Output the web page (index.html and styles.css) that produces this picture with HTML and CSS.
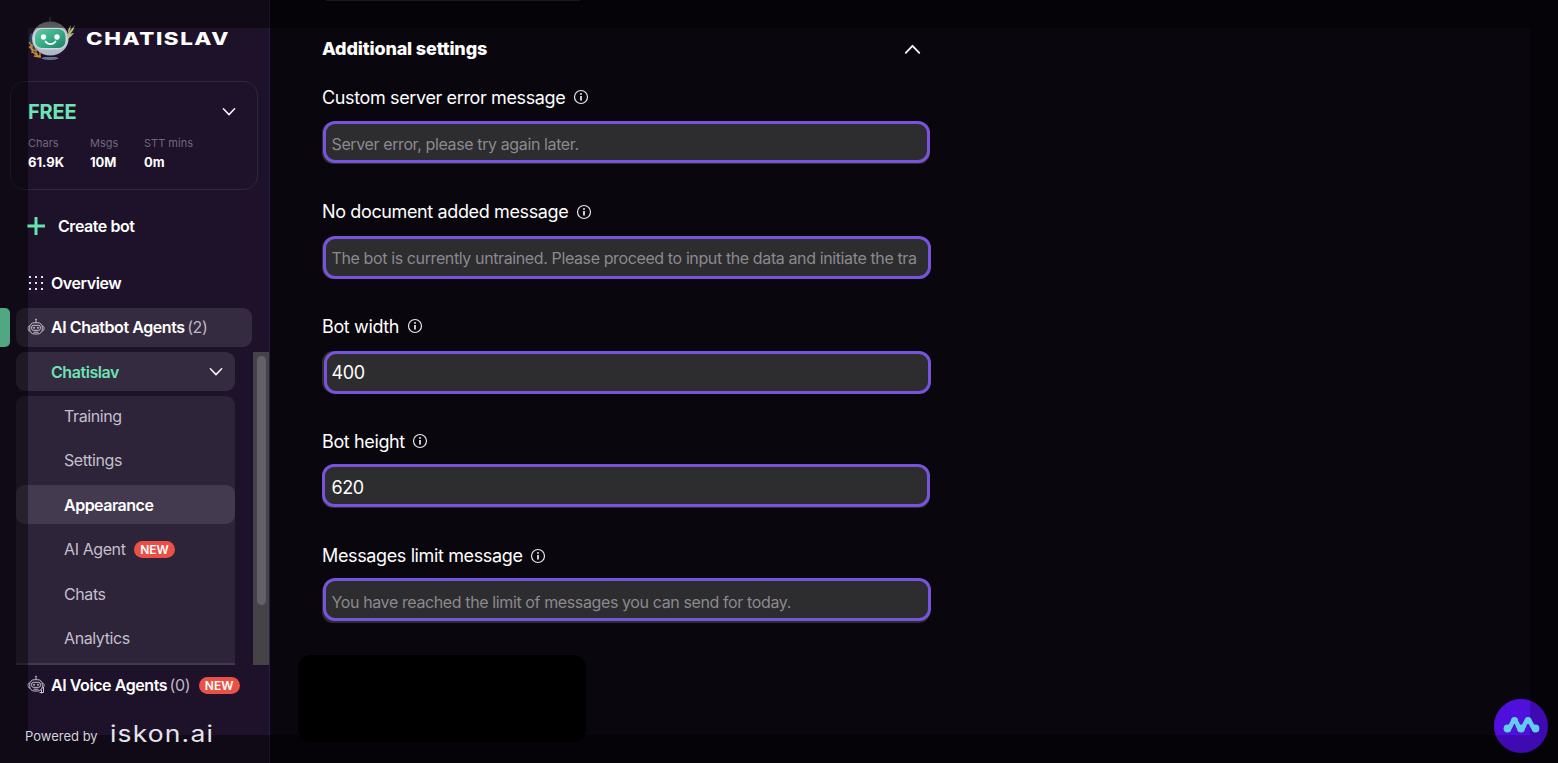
FILE: index.html
```html
<!DOCTYPE html>
<html lang="en">
<head>
<meta charset="utf-8">
<title>Chatislav</title>
<link rel="stylesheet" href="styles.css">
</head>
<body>
<svg class="defs" width="0" height="0">
  <symbol id="info" viewBox="0 0 16 16"><circle cx="8" cy="8" r="6.500" fill="none" stroke="#e8e8ec" stroke-width="1.200"/><path d="M8 7v4.400" stroke="#fff" stroke-width="1.600"/><circle cx="8" cy="4.900" r=".95" fill="#fff"/></symbol>
  <symbol id="chev" viewBox="0 0 14 10"><path d="M1.400 1.800 7 7.600l5.600-5.800" fill="none" stroke="#f3f1f6" stroke-width="1.600" stroke-linecap="round" stroke-linejoin="round"/></symbol>
  <symbol id="bot" viewBox="0 0 18 18"><g fill="none" stroke="#c6c2cf" stroke-width="1"><path d="M9 4.500V2.400"/><circle cx="9" cy="1.600" r=".6"/><rect x="2.700" y="4.700" width="12.600" height="11.300" rx="4.600"/><rect x="4.600" y="7.300" width="8.800" height="5" rx="1.800"/><path d="M2.700 8C.3 8 .3 13 2.700 13M15.300 8c2.400 0 2.400 5 0 5M6.500 14.200h5"/><circle cx="7" cy="9.700" r=".7"/><circle cx="11" cy="9.700" r=".7"/></g></symbol>
</svg>
<div class="app">
  <aside class="sidebar">
    <header class="brand">
      <svg class="robot" width="48" height="46" viewBox="0 0 48 46">
        <defs>
          <linearGradient id="shell" x1="0" y1="0" x2="0" y2="1"><stop offset="0" stop-color="#8e8e96"/><stop offset=".5" stop-color="#c3c5d0"/><stop offset="1" stop-color="#adb3c6"/></linearGradient>
          <linearGradient id="face" x1="0" y1="0" x2="1" y2="1"><stop offset="0" stop-color="#62c9a0"/><stop offset=".5" stop-color="#35ad86"/><stop offset="1" stop-color="#1d8068"/></linearGradient>
        </defs>
        <path d="M22 0v6" stroke="#66636e" stroke-width="1"/>
        <path d="M38 20c2-4 5-8 9-12-1 5-3 7-5 9 2-1 3-1 4-1-2 3-5 5-8 7zM40 15c0-3 1-5 3-7 0 3-1 6-3 8z" fill="#b3bd78"/>
        <path d="M3 16c-3 5-2 14 4 19l3-3C5 28 5 22 6 17z" fill="#244a5a"/>
        <ellipse cx="22.300" cy="21.500" rx="18.300" ry="17" fill="url(#shell)"/>
        <rect x="5.500" y="10.500" width="33.500" height="22" rx="9" fill="#d4d7df"/>
        <rect x="7" y="12" width="30.500" height="19" rx="7" fill="url(#face)"/>
        <circle cx="15.500" cy="20" r="2.700" fill="#fff"/><circle cx="29" cy="20" r="2.700" fill="#fff"/>
        <path d="M17.500 24.500c2.500 3.600 7.500 3.600 10 0" stroke="#fff" stroke-width="1.700" fill="none" stroke-linecap="round"/>
        <path d="M13 41.500q9 3 18 0l-3-1.500H16z" fill="#65708f"/>
        <path d="M1 25l3 5M1 30l6 4M3 35l7 2M6 39l6 1M4 27v5M8 31v5M12 35v5M2 29q3 9 11 11" stroke="#c28a3c" stroke-width="1.300" fill="none"/>
      </svg>
      <svg class="wordmark" width="150" height="20"><text x="1" y="15.500" textLength="144" lengthAdjust="spacingAndGlyphs">CHATISLAV</text></svg>
    </header>
    <section class="plan">
      <div class="plan-head"><span class="plan-name">FREE</span><svg width="14" height="10"><use href="#chev"/></svg></div>
      <div class="stats">
        <div class="stat s1"><small>Chars</small><b>61.9K</b></div>
        <div class="stat s2"><small>Msgs</small><b>10M</b></div>
        <div class="stat"><small>STT mins</small><b>0m</b></div>
      </div>
    </section>
    <a class="create"><svg width="18" height="18"><path d="M9 0v18M0 9h18" stroke="#67e3b0" stroke-width="3"/></svg><span>Create bot</span></a>
    <a class="item overview"><svg width="18" height="16" viewBox="0 0 18 16"><g fill="#e4e2e8"><rect x="2" y="1" width="2" height="2"/><rect x="8" y="1" width="2" height="2"/><rect x="14" y="1" width="2" height="2"/><rect x="2" y="7" width="2" height="2"/><rect x="8" y="7" width="2" height="2"/><rect x="14" y="7" width="2" height="2"/><rect x="2" y="13" width="2" height="2"/><rect x="8" y="13" width="2" height="2"/><rect x="14" y="13" width="2" height="2"/></g></svg><span>Overview</span></a>
    <div class="active-row"><i class="tab"></i><a class="item chatbots"><svg width="18" height="18"><use href="#bot"/></svg><span>AI Chatbot Agents</span><em>(2)</em></a></div>
    <div class="scroll">
      <div class="tree">
        <a class="bot-row"><span>Chatislav</span><svg width="14" height="10"><use href="#chev"/></svg></a>
        <nav class="sub">
          <a><span>Training</span></a>
          <a><span>Settings</span></a>
          <a class="current"><span>Appearance</span></a>
          <a><span>AI Agent</span><mark>NEW</mark></a>
          <a><span>Chats</span></a>
          <a><span>Analytics</span></a>
        </nav>
      </div>
      <div class="track"><div class="thumb"></div></div>
    </div>
    <a class="item voice"><svg width="18" height="20" viewBox="0 0 18 20"><use href="#bot" width="18" height="18"/><path d="M16.500 12v5.500h-4M14.500 14.500v4" stroke="#c6c2cf" fill="none"/></svg><span>AI Voice Agents</span><em>(0)</em><mark>NEW</mark></a>
    <footer class="powered"><span>Powered by</span><svg width="120" height="30"><text x="0" y="22" textLength="104" lengthAdjust="spacingAndGlyphs">iskon.ai</text></svg></footer>
  </aside>
  <main class="main">
    <div class="prev"></div>
    <div class="content">
      <div class="section-head"><h2>Additional settings</h2><svg class="up" width="17" height="12" viewBox="0 0 14 10"><use href="#chev"/></svg></div>
      <div class="field f1"><label>Custom server error message <svg width="16" height="16"><use href="#info"/></svg></label><div class="input"><span>Server error, please try again later.</span></div></div>
      <div class="field f2"><label>No document added message <svg width="16" height="16"><use href="#info"/></svg></label><div class="input"><span>The bot is currently untrained. Please proceed to input the data and initiate the tra</span></div></div>
      <div class="field f3"><label>Bot width <svg width="16" height="16"><use href="#info"/></svg></label><div class="input value"><span>400</span></div></div>
      <div class="field f4"><label>Bot height <svg width="16" height="16"><use href="#info"/></svg></label><div class="input value"><span>620</span></div></div>
      <div class="field f5"><label>Messages limit message <svg width="16" height="16"><use href="#info"/></svg></label><div class="input"><span>You have reached the limit of messages you can send for today.</span></div></div>
    </div>
    <div class="blank"></div>
  </main>
</div>
<div class="vignette"></div>
<svg class="fab" width="54" height="54" viewBox="0 0 54 54"><defs><clipPath id="disc"><circle cx="27" cy="27" r="27"/></clipPath></defs><g clip-path="url(#disc)"><path d="M0 0h54v54H0z" fill="#3f0ab2"/><path d="M0 0h36v36H0z" fill="#500fdc"/></g><path d="M13 29.500C18 30 17 21.500 20.500 21.500S23 30 27 30s3-8.500 7-8.500S37 30 41.500 29.500" fill="none" stroke="#62cdee" stroke-width="4.500" stroke-linecap="round" stroke-linejoin="round"/><g fill="#62cdee"><circle cx="13.500" cy="29.500" r="3.900"/><circle cx="20.500" cy="21.500" r="3.500"/><circle cx="27" cy="29.500" r="3.900"/><circle cx="34" cy="21.500" r="3.500"/><circle cx="41.500" cy="29.500" r="3.900"/></g></svg>
</body>
</html>
```
FILE: styles.css
```css
* { box-sizing: border-box; }
body { margin: 0; background: #09060d; font-family: Inter, "Liberation Sans", sans-serif; color: #fff; overflow: hidden; }
.defs { position: absolute; }
svg { display: block; flex: none; }
.app { display: flex; width: 1558px; height: 763px; }
.sidebar { width: 270px; flex: none; background: #1d1229; border-right: 1px solid #2b1c4e; display: flex; flex-direction: column; }
.brand { height: 81px; padding: 17px 0 0 28px; display: flex; flex: none; }
.wordmark { margin: 12px 0 0 9px; }
.wordmark text { font: 800 17px Inter, sans-serif; fill: #fff; letter-spacing: 1.2px; }
.plan { margin-left: 10px; width: 248px; height: 109px; border: 1px solid #30273d; border-radius: 14px; padding: 17px 21px 0 17px; flex: none; }
.plan-head { display: flex; justify-content: space-between; align-items: center; height: 26px; }
.plan-name { color: #6fe3b4; font-size: 20px; font-weight: 700; letter-spacing: -.2px; }
.stats { display: flex; margin-top: 10px; }
.stat { display: flex; flex-direction: column; }
.s1 { width: 62px; }
.s2 { width: 54px; }
.stat small { font-size: 11px; line-height: 17px; color: #6f677a; }
.stat b { font-size: 13px; line-height: 20px; font-weight: 700; }
.create { height: 72px; padding-left: 27px; display: flex; align-items: center; font-size: 16px; font-weight: 600; letter-spacing: -.45px; }
.create span { margin-left: 13px; }
.item { display: flex; align-items: center; font-size: 16px; font-weight: 600; letter-spacing: -.43px; white-space: nowrap; }
.item span { margin-left: 6px; }
.item em { font-style: normal; font-weight: 400; color: #bdb8c5; margin-left: 2.500px; letter-spacing: -.4px; }
.overview { height: 40px; padding: 1px 0 0 27px; margin-bottom: 6px; }
.active-row { display: flex; height: 39px; gap: 6px; }
.tab { width: 10px; background: #4fa882; border-radius: 0 5px 5px 0; position: relative; z-index: 3; }
.chatbots { width: 236px; background: #352b40; border-radius: 9px; padding: 0 0 1px 11px; }
.scroll { display: flex; height: 313px; margin-top: 5px; padding-left: 16px; justify-content: space-between; flex: none; overflow: hidden; }
.tree { width: 219px; display: flex; flex-direction: column; gap: 5px; border-bottom: 2px solid #443a50; }
.bot-row { height: 39px; border-radius: 9px; background: #352b40; padding: 0 12px 0 35px; display: flex; align-items: center; justify-content: space-between; color: #6fe3b4; font-size: 16px; font-weight: 600; letter-spacing: -.43px; flex: none; }
.sub { background: #2d2439; border-radius: 9px 9px 0 0; flex: 1; display: flex; flex-direction: column; gap: 5.400px; }
.sub a { height: 39px; padding: 1px 0 0 48px; display: flex; align-items: center; font-size: 16px; letter-spacing: -.4px; color: #c4bfcb; flex: none; }
.sub .current { background: #443a50; color: #fff; font-weight: 600; letter-spacing: -.5px; border-radius: 9px; }
mark { background: #ea5046; color: #fff; font-size: 12px; font-weight: 600; letter-spacing: 0; line-height: 17px; border-radius: 9px; width: 41px; text-align: center; margin-left: 8.500px; }
.track { width: 16px; background: #454248; padding: 4px 3px 0 4px; }
.thumb { height: 249px; border-radius: 5px; background: #636067; }
.voice { height: 40px; padding-left: 27px; }
.powered { display: flex; align-items: center; margin-top: 16px; height: 30px; padding-left: 25px; font-size: 13px; color: #d6d3da; position: relative; z-index: 3; }
.powered svg { margin: -2px 0 0 12px; }
.powered text { font: 400 22.500px Inter, sans-serif; fill: #e6e3ec; letter-spacing: 1px; }
.main { flex: 1; padding-left: 28px; display: flex; flex-direction: column; }
.prev { height: 1px; width: 254px; margin-left: 28px; background: #2b2b2e; }
.content { padding-left: 24px; height: 654px; }
.section-head { display: flex; justify-content: space-between; align-items: center; width: 599px; height: 96px; margin-bottom: -13px; }
h2 { margin: 0 0 1px; font-size: 18px; font-weight: 800; letter-spacing: -.15px; }
.up { transform: scaleY(-1); margin-bottom: 1px; }
.field { width: 608px; height: 114.700px; position: relative; }
.field label { display: flex; align-items: center; gap: 7.500px; height: 26px; font-size: 18px; letter-spacing: -.37px; white-space: nowrap; }
.input { height: 42px; margin-top: 12px; border-radius: 11px; background: #2d2c2e; display: flex; align-items: center; padding: 1px 0 0 9.500px; font-size: 16px; letter-spacing: -.385px; color: #8b898e; white-space: nowrap; }
.value { color: #fff; font-size: 18px; letter-spacing: -.4px; }
/* highlight ring drawn over each input */
.field::after { content: ""; box-sizing: border-box; position: absolute; left: 1px; top: 37.500px; width: 607px; height: 43px; border: 3px solid #7853dc; border-radius: 12px; }
.f1::after { top: 37px; height: 42px; }
.f2::after { width: 608px; }
.f3::after { left: 2px; width: 607px; }
.f4::after { left: 0; top: 36px; width: 608px; }
.f5::after { top: 35.500px; width: 608px; }
.blank { width: 288px; height: 87px; border-radius: 13px; background: #000; position: relative; z-index: 3; }
.fab { position: absolute; left: 1494px; top: 699px; z-index: 3; }
.vignette { position: absolute; inset: 0; border: 28px solid rgba(0, 0, 0, .42); z-index: 2; pointer-events: none; }
```
